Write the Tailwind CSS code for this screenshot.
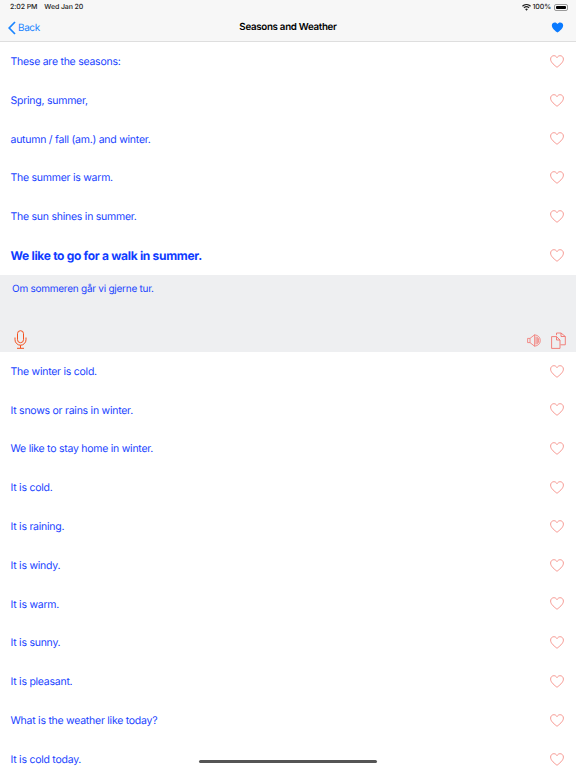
<!DOCTYPE html>
<html><head><meta charset="utf-8"><script src="https://cdn.jsdelivr.net/npm/@tailwindcss/browser@4"></script></head>
<body class="bg-white">
<svg width="0" height="0" class="absolute"><defs>
<symbol id="h" viewBox="0 0 14 13"><path d="M7 12.3C5 10.6 0.6 7.6 0.6 4.1 0.6 2.1 2.1 0.7 3.9 0.7 5.2 0.7 6.3 1.4 7 2.6 7.7 1.4 8.8 0.7 10.1 0.7 11.9 0.7 13.4 2.1 13.4 4.1 13.4 7.6 9 10.6 7 12.3Z" fill="none" stroke="#f58d86" stroke-width="0.9"/></symbol>
</defs></svg>
<div class="relative w-[576px] h-[768px] overflow-hidden font-['Inter','Liberation_Sans',sans-serif] [text-rendering:geometricPrecision] text-[#1a44ff]">
  <header class="h-[42px] bg-[#f7f7f7] border-b border-[#dedede] flex flex-col">
    <div class="h-[14px] flex items-center justify-between pl-[10px] pr-[8px] text-[7px] font-medium text-[#222] tracking-[-0.1px]">
      <div class="flex gap-[7px] pt-[1px]"><span>2:02 PM</span><span>Wed Jan 20</span></div>
      <div class="flex items-center gap-[2px]">
        <svg width="9" height="7" viewBox="0 0 18 14"><path d="M9 13.5 6.3 10.4a4 4 0 0 1 5.4 0Z M4.7 8.7 3 6.8a9 9 0 0 1 12 0L13.3 8.7a6.4 6.4 0 0 0-8.6 0Z M1.7 5.3 0 3.4a13.5 13.5 0 0 1 18 0L16.3 5.3a11 11 0 0 0-14.6 0Z" fill="#222"/></svg>
        <span class="pt-[1px]">100%</span>
        <div class="w-[14px] h-[7px] rounded-[2px] border border-[#999] p-[1px] ml-[1px]"><div class="w-full h-full bg-black rounded-[1px]"></div></div>
      </div>
    </div>
    <div class="relative flex-1 flex items-center justify-between pl-[8px] pr-[12px]">
      <div class="flex items-center gap-[2px] text-[#1a84ff] text-[10px] tracking-[-0.4px]">
        <svg width="8" height="14" viewBox="0 0 8 14"><path d="M7 1 1.2 7 7 13" fill="none" stroke="#1a84ff" stroke-width="1.7"/></svg>
        <span class="pt-[2px]">Back</span>
      </div>
      <div class="absolute inset-x-0 pt-[2px] text-center text-[9.75px] font-semibold text-black tracking-[-0.3px]">Seasons and Weather</div>
      <svg width="13" height="11" viewBox="0 0 14 13"><path d="M7 12.5C5 10.8 0.3 7.6 0.3 4 0.3 2 1.9 0.5 3.8 0.5 5.2 0.5 6.3 1.3 7 2.5 7.7 1.3 8.8 0.5 10.2 0.5 12.1 0.5 13.7 2 13.7 4 13.7 7.6 9 10.8 7 12.5Z" fill="#0a7aff"/></svg>
    </div>
  </header>
  <main class="text-[10.5px] tracking-[-0.25px]">
    <div class="h-[38.8px] flex items-center justify-between pl-[10.5px] pr-[12px]"><span class="pt-[1px]">These are the seasons:</span><svg width="14" height="13"><use href="#h"/></svg></div>
    <div class="h-[38.8px] flex items-center justify-between pl-[10.5px] pr-[12px]"><span class="pt-[1px]">Spring, summer,</span><svg width="14" height="13"><use href="#h"/></svg></div>
    <div class="h-[38.8px] flex items-center justify-between pl-[10.5px] pr-[12px]"><span class="pt-[1px]">autumn / fall (am.) and winter.</span><svg width="14" height="13"><use href="#h"/></svg></div>
    <div class="h-[38.8px] flex items-center justify-between pl-[10.5px] pr-[12px]"><span class="pt-[1px]">The summer is warm.</span><svg width="14" height="13"><use href="#h"/></svg></div>
    <div class="h-[38.8px] flex items-center justify-between pl-[10.5px] pr-[12px]"><span class="pt-[1px]">The sun shines in summer.</span><svg width="14" height="13"><use href="#h"/></svg></div>
    <div class="h-[38.8px] flex items-center justify-between pl-[10.5px] pr-[12px]"><span class="pt-[1px] text-[12px] font-bold tracking-[-0.3px] text-[#0f3cff]">We like to go for a walk in summer.</span><svg width="14" height="13"><use href="#h"/></svg></div>
    <section class="h-[77px] bg-[#eeeff1] flex flex-col justify-between pl-[12px] pr-[10px]">
      <p class="pt-[7px] text-[10px] leading-[14px]">Om sommeren går vi gjerne tur.</p>
      <div class="flex items-end justify-between pb-[3px]">
        <svg class="ml-[2px]" width="13" height="19" viewBox="0 0 13 19" fill="none" stroke="#f4511e" stroke-width="1"><rect x="3.5" y="0.7" width="6" height="12" rx="3"/><path d="M1 7.5V9.7a5.5 5.5 0 0 0 11 0V7.5M6.5 15.2V18M3 18.3H10"/></svg>
        <div class="flex items-end gap-[10px]">
          <svg class="mb-[2px]" width="14" height="13" viewBox="0 0 14 13" fill="none" stroke="#f2746e" stroke-width="0.8"><path d="M.6 4.4H3V8.6H.6ZM3 4.4 7.6.8V12.2L3 8.6M7.6.8C11 1.2 13.3 3.4 13.3 6.5S11 11.8 7.6 12.2M9 2.5V10.5M10.3 3V10M11.6 4.2V8.8"/></svg>
          <svg width="15" height="17" viewBox="0 0 15 17" fill="none" stroke="#f2746e" stroke-width="0.9"><path d="M5.5 3.2V1H10L14.3 4.5V12.8H9.5M10 1V4.5H14.3"/><path d="M.6 4.6H5.5L9 8V16.4H.6ZM5.5 4.6V8H9"/></svg>
        </div>
      </div>
    </section>
    <div class="h-[38.8px] flex items-center justify-between pl-[10.5px] pr-[12px]"><span class="pt-[1px]">The winter is cold.</span><svg width="14" height="13"><use href="#h"/></svg></div>
    <div class="h-[38.8px] flex items-center justify-between pl-[10.5px] pr-[12px]"><span class="pt-[1px]">It snows or rains in winter.</span><svg width="14" height="13"><use href="#h"/></svg></div>
    <div class="h-[38.8px] flex items-center justify-between pl-[10.5px] pr-[12px]"><span class="pt-[1px]">We like to stay home in winter.</span><svg width="14" height="13"><use href="#h"/></svg></div>
    <div class="h-[38.8px] flex items-center justify-between pl-[10.5px] pr-[12px]"><span class="pt-[1px]">It is cold.</span><svg width="14" height="13"><use href="#h"/></svg></div>
    <div class="h-[38.8px] flex items-center justify-between pl-[10.5px] pr-[12px]"><span class="pt-[1px]">It is raining.</span><svg width="14" height="13"><use href="#h"/></svg></div>
    <div class="h-[38.8px] flex items-center justify-between pl-[10.5px] pr-[12px]"><span class="pt-[1px]">It is windy.</span><svg width="14" height="13"><use href="#h"/></svg></div>
    <div class="h-[38.8px] flex items-center justify-between pl-[10.5px] pr-[12px]"><span class="pt-[1px]">It is warm.</span><svg width="14" height="13"><use href="#h"/></svg></div>
    <div class="h-[38.8px] flex items-center justify-between pl-[10.5px] pr-[12px]"><span class="pt-[1px]">It is sunny.</span><svg width="14" height="13"><use href="#h"/></svg></div>
    <div class="h-[38.8px] flex items-center justify-between pl-[10.5px] pr-[12px]"><span class="pt-[1px]">It is pleasant.</span><svg width="14" height="13"><use href="#h"/></svg></div>
    <div class="h-[38.8px] flex items-center justify-between pl-[10.5px] pr-[12px]"><span class="pt-[1px]">What is the weather like today?</span><svg width="14" height="13"><use href="#h"/></svg></div>
    <div class="h-[38.8px] flex items-center justify-between pl-[10.5px] pr-[12px]"><span class="pt-[1px]">It is cold today.</span><svg width="14" height="13"><use href="#h"/></svg></div>
  </main>
  <div class="absolute left-[199px] bottom-[5px] w-[178px] h-[3px] rounded-full bg-[#555]"></div>
</div>
</body></html>
